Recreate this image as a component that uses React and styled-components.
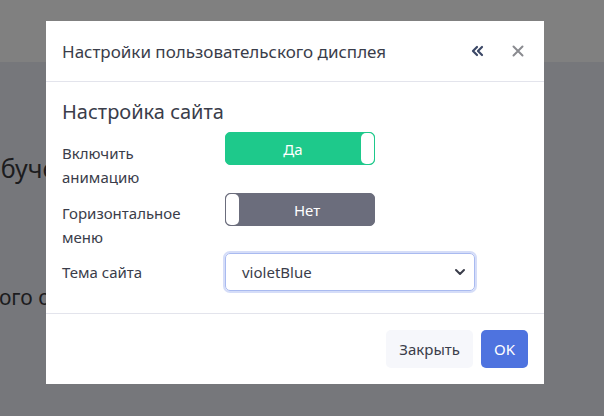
import React from 'react';
import styled, { createGlobalStyle } from 'styled-components';

const GlobalStyle = createGlobalStyle`
  html, body {
    margin: 0;
    padding: 0;
    background: #76777b;
    font-family: "Noto Sans", "Liberation Sans", sans-serif;
  }
`;

const Page = styled.div`
  position: relative;
  width: 604px;
  height: 416px;
  overflow: hidden;
  background: #76777b;
`;

const TopBar = styled.div`
  height: 62px;
  background: #808080;
`;

const BackText = styled.div`
  color: #1c1c1e;
  font-size: ${p => p.size}px;
  margin-top: ${p => p.top}px;
  margin-left: -14px;
  line-height: 1;
  white-space: nowrap;
`;

const Modal = styled.div`
  position: absolute;
  left: 46px;
  top: 21px;
  width: 498px;
  background: #fff;
  display: flex;
  flex-direction: column;
`;

const Header = styled.div`
  height: 60px;
  border-bottom: 1px solid #e3e4ec;
  display: flex;
  align-items: center;
  padding: 0 16px;
`;

const Title = styled.div`
  flex: 1;
  font-size: 17px;
  color: #3a3d4a;
`;

const IconButton = styled.button`
  border: none;
  background: none;
  padding: 0;
  display: flex;
  align-items: center;
  justify-content: center;
  width: 20px;
  height: 20px;
  margin-left: ${p => p.gap || 0}px;
  cursor: pointer;
`;

const Body = styled.div`
  padding: 16px 16px 22px;
  border-bottom: 1px solid #e3e4ec;
`;

const SectionTitle = styled.div`
  font-size: 20px;
  color: #3a3d4a;
  line-height: 28px;
  margin-bottom: 6px;
`;

const Row = styled.div`
  display: grid;
  grid-template-columns: 163px 1fr;
  align-items: ${p => (p.center ? 'center' : 'start')};
  margin-bottom: ${p => p.gap || 0}px;
`;

const Label = styled.div`
  font-size: 15px;
  line-height: 24px;
  color: #3a3d4a;
  padding-top: ${p => p.pad || 0}px;
`;

const Switch = styled.div`
  position: relative;
  width: 150px;
  height: 33px;
  box-sizing: border-box;
  border-radius: 5px;
  background: ${p => (p.on ? '#1ec98b' : '#6b6d7c')};
  border: 1px solid ${p => (p.on ? '#1ec98b' : '#6b6d7c')};
  color: #fff;
  font-size: 15px;
  display: flex;
  align-items: center;
  justify-content: center;
  padding: ${p => (p.on ? '0 14px 0 0' : '0 0 0 14px')};
`;

const Knob = styled.span`
  position: absolute;
  top: 0;
  bottom: 0;
  ${p => (p.on ? 'right: 0;' : 'left: 0;')}
  width: 13px;
  background: #fff;
  border-radius: 5px;
`;

const SelectBox = styled.div`
  width: 250px;
  height: 38px;
  box-sizing: border-box;
  border: 1px solid #a9baf0;
  box-shadow: 0 0 0 2px #d5ddf8;
  border-radius: 5px;
  display: flex;
  align-items: center;
  justify-content: space-between;
  padding: 0 8px 0 16px;
  font-size: 15px;
  color: #3a3d4a;
`;

const Footer = styled.div`
  display: flex;
  justify-content: flex-end;
  gap: 8px;
  padding: 16px;
`;

const Button = styled.button`
  height: 38px;
  border: none;
  border-radius: 5px;
  padding: 0 13px;
  font-family: inherit;
  font-size: 15px;
  background: ${p => (p.primary ? '#4e73df' : '#f6f7fb')};
  color: ${p => (p.primary ? '#fff' : '#3a3d4a')};
`;

export default function App() {
  return (
    <>
      <GlobalStyle />
      <Page>
        <TopBar />
        <BackText size={25} top={94}>обучение</BackText>
        <BackText size={21} top={106}>ного обучения</BackText>
        <Modal>
          <Header>
            <Title>Настройки пользовательского дисплея</Title>
            <IconButton>
              <svg width="14" height="12" viewBox="0 0 14 12">
                <path d="M6 2 L2 6 L6 10 M11 2 L7 6 L11 10" stroke="#3b4766" strokeWidth="2.2" fill="none" strokeLinecap="round" strokeLinejoin="round" />
              </svg>
            </IconButton>
            <IconButton gap={20}>
              <svg width="12" height="12" viewBox="0 0 12 12">
                <path d="M1.5 1.5 L10.5 10.5 M10.5 1.5 L1.5 10.5" stroke="#8a8b90" strokeWidth="2" fill="none" strokeLinecap="round" />
              </svg>
            </IconButton>
          </Header>
          <Body>
            <SectionTitle>Настройка сайта</SectionTitle>
            <Row gap={4}>
              <Label pad={9}>Включить<br />анимацию</Label>
              <Switch on>
                Да
                <Knob on />
              </Switch>
            </Row>
            <Row gap={4}>
              <Label pad={8}>Горизонтальное<br />меню</Label>
              <Switch>
                Нет
                <Knob />
              </Switch>
            </Row>
            <Row center>
              <Label>Тема сайта</Label>
              <SelectBox>
                violetBlue
                <svg width="12" height="8" viewBox="0 0 12 8">
                  <path d="M2 2 L6 6 L10 2" stroke="#3a3d4a" strokeWidth="2" fill="none" strokeLinecap="round" strokeLinejoin="round" />
                </svg>
              </SelectBox>
            </Row>
          </Body>
          <Footer>
            <Button>Закрыть</Button>
            <Button primary>OK</Button>
          </Footer>
        </Modal>
      </Page>
    </>
  );
}
